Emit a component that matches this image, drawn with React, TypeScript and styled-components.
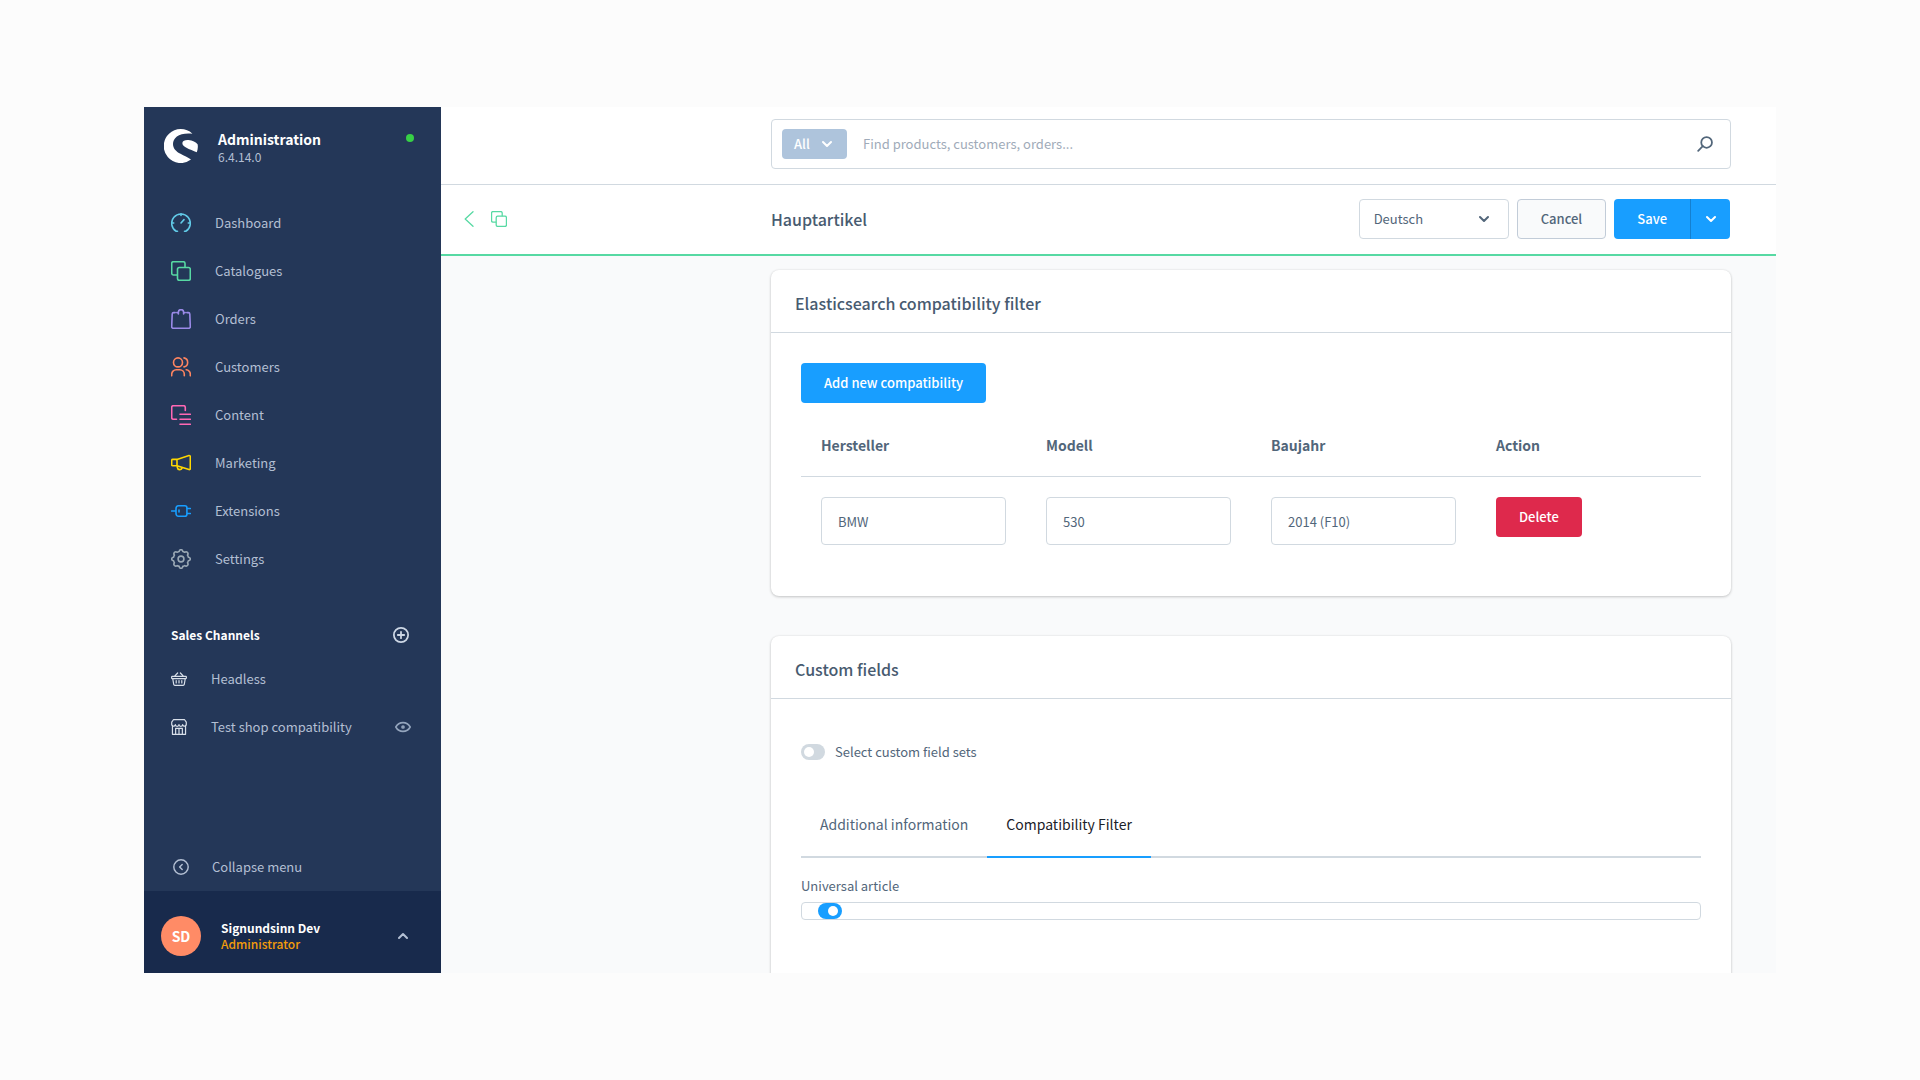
import React, { useState } from "react";
import styled, { createGlobalStyle } from "styled-components";

const color = {
  navy: "#243758",
  navyDark: "#182a4c",
  menuText: "#b3bfd3",
  text: "#52667a",
  heading: "#485b70",
  border: "#d1d9e0",
  blue: "#189eff",
  green: "#57d9a3",
  red: "#de294c",
  surface: "#f9fafb",
};

const GlobalStyle = createGlobalStyle`
  *, *::before, *::after { box-sizing: border-box; }
  body {
    margin: 0;
    background: #fcfcfc;
    color: ${color.text};
    font-family: "Source Sans Pro", "Noto Sans CJK SC", "Noto Sans", sans-serif;
    font-size: 13px;
    line-height: 20px;
  }
  button, input, select { font: inherit; color: inherit; }
  button, select { cursor: pointer; }
  h1, h2, p, ul { margin: 0; padding: 0; }
  ul { list-style: none; }
  a { color: inherit; text-decoration: none; }
  svg { display: block; flex: none; }
`;

const Page = styled.div`
  height: 100vh;
  padding: 107px 144px;
`;

const Shell = styled.div`
  display: flex;
  height: 100%;
  overflow: hidden;
  background: ${color.surface};
`;

/* ---------- Sidebar ---------- */

const Sidebar = styled.aside`
  display: flex;
  flex: none;
  flex-direction: column;
  width: 297px;
  background: ${color.navy};
  color: ${color.menuText};
`;

const Brand = styled.header`
  display: flex;
  gap: 20px;
  padding: 22px 27px 0 20px;
`;

const BrandText = styled.div`
  flex: 1;
  font-size: 12px;
  line-height: 16px;
`;

const BrandName = styled.p`
  color: #fff;
  font-size: 14px;
  font-weight: 700;
  line-height: 20px;
`;

const StatusDot = styled.span`
  width: 8px;
  height: 8px;
  margin-top: 5px;
  border-radius: 50%;
  background: #37d046;
`;

const MainMenu = styled.ul`
  padding-top: 34px;
`;

const MenuLink = styled.a`
  display: flex;
  align-items: center;
  gap: 24px;
  height: 48px;
  padding: 0 30px 0 27px;
`;

const MenuLabel = styled.span`
  flex: 1;
`;

const ChannelHead = styled.div`
  display: flex;
  align-items: center;
  justify-content: space-between;
  margin-top: 40px;
  padding: 0 32px 0 27px;
  height: 24px;
  color: #fff;
  font-size: 12px;
  font-weight: 700;
`;

const IconButton = styled.button`
  padding: 0;
  border: 0;
  background: none;
  color: ${(p) => p.color || color.menuText};
`;

const ChannelMenu = styled.ul`
  flex: 1;
  padding-top: 8px;
  color: ${color.menuText};
`;

const CollapseButton = styled.button`
  display: flex;
  align-items: center;
  gap: 23px;
  height: 48px;
  padding: 0 29px;
  border: 0;
  background: none;
`;

const UserBar = styled.button`
  display: flex;
  align-items: center;
  gap: 20px;
  height: 82px;
  padding: 8px 33px 0 17px;
  border: 0;
  background: ${color.navyDark};
  text-align: left;
  font-size: 12px;
  font-weight: 700;
  line-height: 16px;
`;

const Avatar = styled.span`
  width: 40px;
  height: 40px;
  border-radius: 50%;
  background: #ff8b66;
  color: #fff;
  font-size: 14px;
  font-weight: 700;
  line-height: 40px;
  text-align: center;
`;

const UserText = styled.span`
  display: grid;
  flex: 1;
  color: #fff;
`;

const Role = styled.span`
  color: #f39c0b;
  font-weight: 500;
`;

/* ---------- Top area ---------- */

const Main = styled.main`
  display: flex;
  flex: 1;
  flex-direction: column;
  min-width: 0;
`;

const columns = `
  display: grid;
  grid-template-columns: 330px minmax(0, 1fr);
  padding-right: 45px;
`;

const SearchArea = styled.header`
  ${columns}
  flex: none;
  padding-top: 12px;
  padding-bottom: 15px;
  border-bottom: 1px solid ${color.border};
  background: #fff;
`;

const SearchBox = styled.form`
  display: flex;
  grid-column: 2;
  align-items: center;
  gap: 16px;
  height: 50px;
  padding: 0 17px 0 10px;
  border: 1px solid ${color.border};
  border-radius: 4px;
`;

const ScopeButton = styled.button`
  display: flex;
  align-items: center;
  justify-content: space-between;
  width: 65px;
  height: 30px;
  padding: 0 15px 0 12px;
  border: 0;
  border-radius: 4px;
  background: #aec4dc;
  color: #fff;
  font-weight: 500;
`;

const SearchInput = styled.input`
  flex: 1;
  min-width: 0;
  padding: 0;
  border: 0;
  outline: 0;
  background: none;
  &::placeholder { color: #9fabb9; opacity: 1; }
`;

const SmartBar = styled.div`
  ${columns}
  flex: none;
  align-items: center;
  height: 71px;
  padding-bottom: 2px;
  border-bottom: 2px solid ${color.green};
  background: #fff;
`;

const SmartNav = styled.nav`
  display: flex;
  gap: 17px;
  padding-left: 23px;
`;

const SmartContent = styled.div`
  display: flex;
  align-items: center;
  justify-content: space-between;
`;

const Title = styled.h1`
  color: ${color.heading};
  font-size: 16px;
  font-weight: 500;
  line-height: 24px;
`;

const Actions = styled.div`
  display: flex;
  gap: 8px;
  padding-right: 1px;
`;

const SelectWrap = styled.div`
  display: flex;
  position: relative;
  width: 150px;
  svg {
    position: absolute;
    top: 15px;
    right: 20px;
    pointer-events: none;
  }
`;

const LanguageSelect = styled.select`
  width: 100%;
  height: 40px;
  padding: 0 14px;
  appearance: none;
  border: 1px solid ${color.border};
  border-radius: 4px;
  background: #fff;
`;

const tones = {
  plain: `border: 1px solid #c2ccd8; background: ${color.surface}; color: ${color.text};`,
  primary: `border: 0; background: ${color.blue}; color: #fff;`,
  danger: `border: 0; background: ${color.red}; color: #fff;`,
};

const Button = styled.button<{ $tone: keyof typeof tones }>`
  height: 40px;
  padding: 0 23px;
  border-radius: 4px;
  font-weight: 500;
  white-space: nowrap;
  ${(p) => tones[p.$tone]}
`;

const SplitButton = styled.div`
  display: flex;
  ${Button}:first-child { border-radius: 4px 0 0 4px; }
  ${Button}:last-child {
    padding: 0 14px 0 15px;
    border-left: 1px solid #1580d0;
    border-radius: 0 4px 4px 0;
  }
`;

/* ---------- Content ---------- */

const Content = styled.div`
  ${columns}
  flex: 1;
  row-gap: 40px;
  align-content: start;
  min-height: 0;
  padding-top: 14px;
  overflow: hidden;
`;

const Card = styled.section`
  grid-column: 2;
  border-radius: 8px;
  background: #fff;
  box-shadow: 0 1px 3px rgba(0, 0, 0, 0.2), 0 0 2px rgba(0, 0, 0, 0.08);
`;

const CardTitle = styled.h2`
  padding: 21px 24px 17px;
  border-bottom: 1px solid ${color.border};
  color: ${color.heading};
  font-size: 16px;
  font-weight: 500;
  line-height: 24px;
`;

const CardBody = styled.div<{ $bottom: number }>`
  padding: 30px 30px ${(p) => p.$bottom}px;
`;

const Table = styled.table`
  width: 100%;
  margin-top: 12px;
  border-collapse: collapse;
  table-layout: fixed;
  text-align: left;
  th {
    padding: 20px;
    border-bottom: 1px solid ${color.border};
    font-size: 14px;
    font-weight: 700;
    line-height: 21px;
  }
  td {
    padding: 20px;
    vertical-align: top;
  }
`;

const Field = styled.input`
  display: block;
  width: 100%;
  height: 48px;
  padding: 0 16px;
  border: 1px solid ${color.border};
  border-radius: 4px;
  background: #fff;
`;

const Switch = styled.input`
  flex: none;
  width: 24px;
  height: 16px;
  margin: 0;
  padding: 3px;
  appearance: none;
  border-radius: 8px;
  background: ${color.border};
  cursor: pointer;
  &::before {
    content: "";
    display: block;
    width: 10px;
    height: 10px;
    border-radius: 50%;
    background: #fff;
  }
  &:checked { padding-left: 10px; background: ${color.blue}; }
`;

const SwitchRow = styled.label`
  display: flex;
  align-items: center;
  gap: 10px;
  width: fit-content;
  padding: 13px 0 40px;
`;

const Tabs = styled.div`
  display: flex;
  box-shadow: inset 0 -2px ${color.border};
`;

const Tab = styled.button<{ $active: boolean }>`
  padding: 10px 19px 20px;
  border: 0;
  border-bottom: 2px solid ${(p) => (p.$active ? color.blue : "transparent")};
  background: none;
  color: ${(p) => (p.$active ? "#1b2129" : color.text)};
  font-size: 14px;
  line-height: 24px;
`;

const FieldLabel = styled.label`
  display: block;
  margin: 18px 0 6px;
`;

const SwitchBox = styled.div`
  display: flex;
  padding: 0 16px;
  border: 1px solid ${color.border};
  border-radius: 4px;
`;

/* ---------- Icons ---------- */

type IconProps = {
  size?: number;
  stroke?: string;
  width?: number;
  children: React.ReactNode;
};

const Icon = ({ size = 20, stroke = "currentColor", width = 1.6, children }: IconProps) => (
  <svg
    width={size}
    height={size}
    viewBox="0 0 20 20"
    fill="none"
    stroke={stroke}
    strokeWidth={width}
    strokeLinecap="round"
    strokeLinejoin="round"
    aria-hidden="true"
  >
    {children}
  </svg>
);

const Logo = () => (
  <svg width="34" height="34" viewBox="0 0 34 34" fill="#fff" aria-hidden="true">
    <path d="M28.4 4.7A17 17 0 1 0 27 30.600C24 28.200 20 26.800 16.500 24.800C12 22.500 9 19.500 9 15C9 8.500 15.500 3.400 28.400 4.700Z" />
    <path d="M32.800 23.300C29.500 21.800 25.500 20.700 22 18.600C19.500 17 18.200 15.600 18.400 13.800C18.800 11.600 21 10.800 24.500 11C28.500 11.300 32 13 33.600 15.200C34.200 18 33.700 20.800 32.800 23.300Z" />
  </svg>
);

const CopyShape = () => (
  <>
    <path d="M6 14H2.500A1.800 1.800 0 0 1 .7 12.200V2.500A1.800 1.800 0 0 1 2.500.7h9.700A1.800 1.800 0 0 1 14 2.500V6" />
    <rect x="6.500" y="6.500" width="12.800" height="12.800" rx="1.800" />
  </>
);

const Chevron = ({ up = false }: { up?: boolean }) => (
  <Icon size={10} width={4}>
    <path d={up ? "M2 14l8-8 8 8" : "M2 6l8 8 8-8"} />
  </Icon>
);

const menu = [
  {
    label: "Dashboard",
    stroke: "#62cbe8",
    art: (
      <>
        <path d="M6.500 18.300H5.200A9.300 9.300 0 1 1 14.800 18.300H13.500" />
        <path d="M10 .9V2.500M.9 10h1.800M17.300 10h1.800M10 10l3-3.400" />
      </>
    ),
  },
  { label: "Catalogues", stroke: "#57d9a3", art: <CopyShape /> },
  {
    label: "Orders",
    stroke: "#9b8ae8",
    art: (
      <>
        <path d="M4.200 3.600H2.600A1.500 1.500 0 0 0 1.200 5L.7 17.600a1.600 1.600 0 0 0 1.600 1.700h15.400a1.600 1.600 0 0 0 1.600-1.700L18.800 5a1.500 1.500 0 0 0-1.400-1.400h-1.600" />
        <path d="M7.400 5V3.200a2.600 2.600 0 0 1 5.200 0V5M7.400 3.600H5.800M12.600 3.600h1.600" />
      </>
    ),
  },
  {
    label: "Customers",
    stroke: "#ff8560",
    art: (
      <>
        <circle cx="7" cy="5.400" r="4.500" />
        <path d="M.7 18.800v-1.500a4.500 4.500 0 0 1 4.500-4.500h3.600a4.500 4.500 0 0 1 4.500 4.500v1.500M13 .9a4.600 4.600 0 0 1 0 9M15.200 12.800a4.300 4.300 0 0 1 4.100 4.500v1.500" />
      </>
    ),
  },
  {
    label: "Content",
    stroke: "#ff68b4",
    art: (
      <path d="M5.500 14.300H2.500A1.800 1.800 0 0 1 .7 12.500V2.500A1.800 1.800 0 0 1 2.500.7h10A1.800 1.800 0 0 1 14.300 2.500V5.500M9 9.300h10.300M9 14.300h10.300M9 19.200h10.300" />
    ),
  },
  {
    label: "Marketing",
    stroke: "#ffd700",
    art: (
      <path d="M6 6.400L18 2.600a1 1 0 0 1 1.300 1V15.600a1 1 0 0 1-1.300 1L6 12.800M6 6.400H1.700a1 1 0 0 0-1 1v4.400a1 1 0 0 0 1 1H6V6.400M6.300 13v1.400a2.500 2.500 0 0 0 4.900.4v-.3" />
    ),
  },
  {
    label: "Extensions",
    stroke: "#189eff",
    art: (
      <>
        <path d="M.7 10H5M7.500 4.700h6.400a2 2 0 0 1 2 2v6.600a2 2 0 0 1-2 2H7.500C6 15.300 5 14 5 12.300V7.700C5 6 6 4.700 7.500 4.700ZM16 7.500h3.300M16 12.500h3.300" />
        <path d="M8 9v2" />
      </>
    ),
  },
  {
    label: "Settings",
    stroke: "#9aa8b5",
    art: (
      <>
        <circle cx="10" cy="10" r="2.900" />
        <path d="M8.200 2.500C8.300 1.400 9 .7 10 .7s1.700.7 1.800 1.800c.9.200 1.100.4 1.900.8.900-.7 2-.6 2.700.1s.8 1.800.1 2.700c.4.800.6 1.100.8 2.100 1.200.1 2 .8 2 1.800s-.8 1.700-2 1.800c-.2.900-.4 1.200-.8 2 .7.900.6 2-.1 2.700s-1.800.8-2.700.1c-.8.400-1 .6-1.900.8-.1 1.200-.8 1.900-1.800 1.900s-1.700-.7-1.800-1.900c-.9-.2-1.200-.4-2-.8-.9.700-2 .6-2.700-.1s-.8-1.800-.1-2.700c-.4-.8-.6-1.100-.8-2C1.400 11.700.7 11 .7 10s.7-1.700 1.900-1.800c.2-1 .4-1.300.8-2.100-.7-.9-.6-2 .1-2.700s1.800-.8 2.700-.1c.8-.4 1.100-.6 2-.8Z" />
      </>
    ),
  },
];

const Basket = () => (
  <Icon size={16} width={1.500} stroke="#d8dfe9">
    <path d="M1.600 6.700h16.800a.8.800 0 0 1 .8.800v1.200a.8.800 0 0 1-.8.800H1.600a.8.800 0 0 1-.8-.8V7.500a.8.800 0 0 1 .8-.8ZM2.200 9.700l1.200 7a1.500 1.500 0 0 0 1.500 1.200h10.200a1.500 1.500 0 0 0 1.500-1.200l1.200-7M4.500 6.500L8.300 2.500M15.500 6.500L11.700 2.500M6.500 12v3M10 12v3M13.500 12v3" />
  </Icon>
);

const Store = () => (
  <Icon size={16} width={1.500} stroke="#d8dfe9">
    <path d="M1.800 8v11.200h16.400V8M3 .9h14L19.100 4v2.500a2.200 2.200 0 0 1-4.500.5 2.300 2.300 0 0 1-4.600 0 2.300 2.300 0 0 1-4.600 0A2.200 2.200 0 0 1 .9 6.500V4ZM5.800 19v-7.200h8.400V19M10 12V19" />
  </Icon>
);

const Eye = () => (
  <Icon size={16} width={2} stroke="#94a5bd">
    <path d="M1 10c2-3.700 5.200-5.500 9-5.500s7 1.800 9 5.500c-2 3.700-5.200 5.500-9 5.500S3 13.700 1 10Z" />
    <circle cx="10" cy="10" r="1.300" />
  </Icon>
);

/* ---------- App ---------- */

const tabNames = ["Additional information", "Compatibility Filter"];

export default function App() {
  const [tab, setTab] = useState(1);

  return (
    <>
      <GlobalStyle />
      <Page>
        <Shell>
          <Sidebar>
            <Brand>
              <Logo />
              <BrandText>
                <BrandName>Administration</BrandName>
                <p>6.4.14.0</p>
              </BrandText>
              <StatusDot />
            </Brand>
            <nav>
              <MainMenu>
                {menu.map((m) => (
                  <li key={m.label}>
                    <MenuLink href="#">
                      <Icon stroke={m.stroke}>{m.art}</Icon>
                      <MenuLabel>{m.label}</MenuLabel>
                    </MenuLink>
                  </li>
                ))}
              </MainMenu>
            </nav>
            <ChannelHead>
              Sales Channels
              <IconButton type="button" aria-label="Add sales channel" color="#cdd7e5">
                <Icon size={16} width={2.200}>
                  <circle cx="10" cy="10" r="8.900" />
                  <path d="M10 6v8M6 10h8" />
                </Icon>
              </IconButton>
            </ChannelHead>
            <ChannelMenu>
              <li>
                <MenuLink href="#">
                  <Basket />
                  <MenuLabel>Headless</MenuLabel>
                </MenuLink>
              </li>
              <li>
                <MenuLink href="#">
                  <Store />
                  <MenuLabel>Test shop compatibility</MenuLabel>
                  <Eye />
                </MenuLink>
              </li>
            </ChannelMenu>
            <CollapseButton type="button">
              <Icon size={16} width={1.800}>
                <circle cx="10" cy="10" r="9" />
                <path d="M11.500 6.800L8.300 10l3.200 3.200" />
              </Icon>
              Collapse menu
            </CollapseButton>
            <UserBar type="button">
              <Avatar>SD</Avatar>
              <UserText>
                <span>Signundsinn Dev</span>
                <Role>Administrator</Role>
              </UserText>
              <Chevron up />
            </UserBar>
          </Sidebar>

          <Main>
            <SearchArea>
              <SearchBox role="search" onSubmit={(e) => e.preventDefault()}>
                <ScopeButton type="button">
                  All
                  <Chevron />
                </ScopeButton>
                <SearchInput aria-label="Search" placeholder="Find products, customers, orders..." />
                <IconButton type="submit" aria-label="Search" color={color.text}>
                  <Icon size={16} width={2.200}>
                    <circle cx="12" cy="8" r="6.700" />
                    <path d="M7.200 12.800L1.500 18.500" />
                  </Icon>
                </IconButton>
              </SearchBox>
            </SearchArea>

            <SmartBar>
              <SmartNav>
                <IconButton type="button" aria-label="Back" color={color.green}>
                  <svg width="10" height="16" viewBox="0 0 10 16" fill="none" stroke="currentColor" strokeWidth="1.300" strokeLinecap="round" strokeLinejoin="round" aria-hidden="true">
                    <path d="M9 .8L1.200 8L9 15.200" />
                  </svg>
                </IconButton>
                <IconButton type="button" aria-label="Catalogue" color={color.green}>
                  <Icon size={16}>
                    <CopyShape />
                  </Icon>
                </IconButton>
              </SmartNav>
              <SmartContent>
                <Title>Hauptartikel</Title>
                <Actions>
                  <SelectWrap>
                    <LanguageSelect aria-label="Language">
                      <option>Deutsch</option>
                      <option>English</option>
                    </LanguageSelect>
                    <Chevron />
                  </SelectWrap>
                  <Button type="button" $tone="plain">Cancel</Button>
                  <SplitButton>
                    <Button type="button" $tone="primary">Save</Button>
                    <Button type="button" $tone="primary" aria-label="More save options">
                      <Chevron />
                    </Button>
                  </SplitButton>
                </Actions>
              </SmartContent>
            </SmartBar>

            <Content>
              <Card>
                <CardTitle>Elasticsearch compatibility filter</CardTitle>
                <CardBody $bottom={31}>
                  <Button type="button" $tone="primary">Add new compatibility</Button>
                  <Table>
                    <thead>
                      <tr>
                        <th scope="col">Hersteller</th>
                        <th scope="col">Modell</th>
                        <th scope="col">Baujahr</th>
                        <th scope="col">Action</th>
                      </tr>
                    </thead>
                    <tbody>
                      <tr>
                        <td><Field aria-label="Hersteller" defaultValue="BMW" /></td>
                        <td><Field aria-label="Modell" defaultValue="530" /></td>
                        <td><Field aria-label="Baujahr" defaultValue="2014 (F10)" /></td>
                        <td><Button type="button" $tone="danger">Delete</Button></td>
                      </tr>
                    </tbody>
                  </Table>
                </CardBody>
              </Card>

              <Card>
                <CardTitle>Custom fields</CardTitle>
                <CardBody $bottom={120}>
                  <SwitchRow>
                    <Switch type="checkbox" role="switch" />
                    Select custom field sets
                  </SwitchRow>
                  <Tabs role="tablist">
                    {tabNames.map((name, i) => (
                      <Tab key={name} type="button" role="tab" aria-selected={tab === i} $active={tab === i} onClick={() => setTab(i)}>
                        {name}
                      </Tab>
                    ))}
                  </Tabs>
                  <FieldLabel htmlFor="universal">Universal article</FieldLabel>
                  <SwitchBox>
                    <Switch id="universal" type="checkbox" role="switch" defaultChecked />
                  </SwitchBox>
                </CardBody>
              </Card>
            </Content>
          </Main>
        </Shell>
      </Page>
    </>
  );
}
